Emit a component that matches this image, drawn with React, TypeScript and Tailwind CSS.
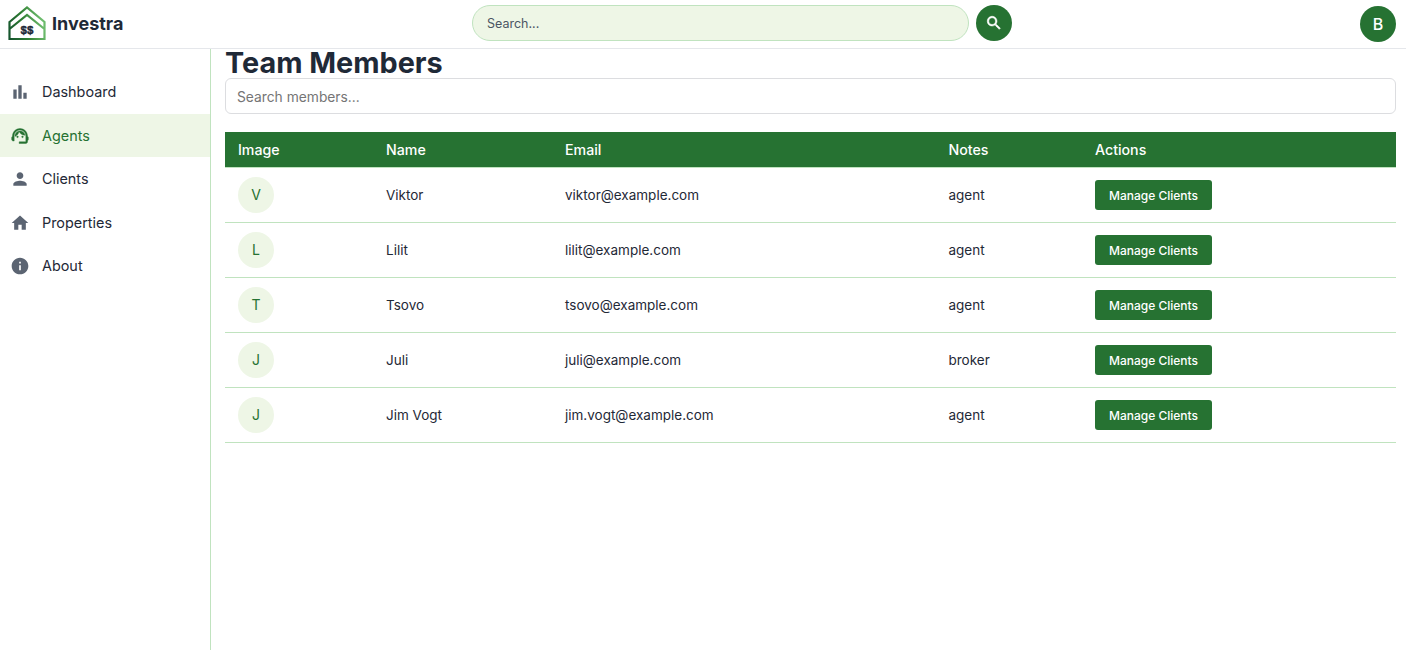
import React from "react";

const navItems = [
  {
    label: "Dashboard",
    icon: <path d="M4 9h4v11H4zm12 4h4v7h-4zm-6-9h4v16h-4z" />,
  },
  {
    label: "Agents",
    active: true,
    icon: (
      <>
        <path d="M21 12.22C21 6.73 16.74 3 12 3c-4.69 0-9 3.65-9 9.28-.6.34-1 .98-1 1.72v2c0 1.1.9 2 2 2h1v-6.1c0-3.87 3.13-7 7-7s7 3.13 7 7V19h-8v2h8c1.1 0 2-.9 2-2v-1.22c.59-.31 1-.92 1-1.64v-2.3c0-.7-.41-1.31-1-1.62z" />
        <circle cx="9" cy="13" r="1" />
        <circle cx="15" cy="13" r="1" />
        <path d="M18 11.03C17.52 8.18 15.04 6 12.05 6c-3.03 0-6.29 2.51-6.03 6.45 2.47-1.01 4.33-3.21 4.86-5.89 1.31 2.63 4 4.44 7.12 4.47z" />
      </>
    ),
  },
  {
    label: "Clients",
    icon: (
      <path d="M12 12c2.21 0 4-1.79 4-4s-1.79-4-4-4-4 1.79-4 4 1.79 4 4 4zm0 2c-2.67 0-8 1.34-8 4v2h16v-2c0-2.66-5.33-4-8-4z" />
    ),
  },
  {
    label: "Properties",
    icon: <path d="M10 20v-6h4v6h5v-8h3L12 3 2 12h3v8z" />,
  },
  {
    label: "About",
    icon: (
      <path d="M12 2C6.48 2 2 6.48 2 12s4.48 10 10 10 10-4.48 10-10S17.52 2 12 2zm1 15h-2v-6h2v6zm0-8h-2V7h2v2z" />
    ),
  },
];

const members = [
  { name: "Viktor", email: "viktor@example.com", notes: "agent" },
  { name: "Lilit", email: "lilit@example.com", notes: "agent" },
  { name: "Tsovo", email: "tsovo@example.com", notes: "agent" },
  { name: "Juli", email: "juli@example.com", notes: "broker" },
  { name: "Jim Vogt", email: "jim.vogt@example.com", notes: "agent" },
];

const cols = "grid grid-cols-[148px_179px_383.5px_146.5px_1fr] items-center px-[13px]";

function Logo() {
  return (
    <svg width="38" height="36" viewBox="0 0 38 36" className="shrink-0">
      <defs>
        <linearGradient id="logoGreen" x1="0" y1="1" x2="1" y2="0.75">
          <stop offset="0" stopColor="#14532d" />
          <stop offset="0.5" stopColor="#2e7d32" />
          <stop offset="1" stopColor="#6cbb6c" />
        </linearGradient>
      </defs>
      <path
        d="M1.5 16 L19 1.5 L36.5 16 V33 H1.5 Z M1.5 23 L19 9 L36.5 23"
        fill="none"
        stroke="url(#logoGreen)"
        strokeWidth="2.2"
        strokeLinejoin="miter"
      />
      <text
        x="19"
        y="28"
        textAnchor="middle"
        fontFamily="'Liberation Sans', sans-serif"
        fontWeight="700"
        fontSize="11.5"
        fill="#1f2937"
        stroke="#1f2937"
        strokeWidth="0.4"
      >
        $$
      </text>
    </svg>
  );
}

export default function App() {
  return (
    <div className="h-[650px] overflow-hidden bg-white font-['Inter',sans-serif] text-[#1f2937]">
      <header className="relative flex h-[49px] items-center justify-between border-b border-[#e5e7eb] pl-2 pr-[10px]">
        <div className="flex items-center gap-[6px]">
          <Logo />
          <span className="text-lg font-bold">Investra</span>
        </div>
        <div className="absolute left-[472px] top-[5px] flex items-center gap-[7px]">
          <input
            placeholder="Search..."
            className="h-9 w-[497px] rounded-full border border-[#c0e3bf] bg-[#eef6e6] px-[14px] text-[12.5px] outline-none placeholder:text-[#4b5563]"
          />
          <button className="flex h-9 w-9 items-center justify-center rounded-full bg-[#267232]">
            <svg width="18" height="18" viewBox="0 0 24 24" fill="#fff" stroke="#fff" strokeWidth="0.7">
              <path d="M15.5 14h-.79l-.28-.27C15.41 12.59 16 11.11 16 9.5 16 5.91 13.09 3 9.5 3S3 5.91 3 9.5 5.91 16 9.5 16c1.61 0 3.09-.59 4.23-1.57l.27.28v.79l5 4.99L20.49 19l-4.99-5zm-6 0C7.01 14 5 11.99 5 9.5S7.01 5 9.5 5 14 7.01 14 9.5 11.99 14 9.5 14z" />
            </svg>
          </button>
        </div>
        <div className="flex h-9 w-9 items-center justify-center rounded-full bg-[#267232] text-base font-medium text-white">
          B
        </div>
      </header>

      <div className="flex h-[601px]">
        <aside className="w-[211px] shrink-0 border-r border-[#c0e3bf] pt-[21.5px]">
          {navItems.map((item) => (
            <div
              key={item.label}
              className={`mb-[0.5px] flex h-[43px] items-center gap-[12px] pl-[10px] text-[14.4px] ${
                item.active ? "bg-[#eef6e6] text-[#267232]" : ""
              }`}
            >
              <svg
                width="20"
                height="20"
                viewBox="0 0 24 24"
                fill={item.active ? "#267232" : "#5b6472"}
                stroke={item.active ? "#267232" : "none"}
                strokeWidth="0.5"
                className="shrink-0"
              >
                {item.icon}
              </svg>
              {item.label}
            </div>
          ))}
        </aside>

        <main className="min-w-0 flex-1 pl-[14px] pr-[10px]">
          <h1 className="h-[29px] text-[28.8px] font-bold leading-[27px]">Team Members</h1>
          <input
            placeholder="Search members..."
            className="block h-9 w-full rounded-md border border-[#dcdde0] px-[11px] pt-px text-[13.8px] outline-none placeholder:text-[#757575]"
          />
          <div className="mt-[18px] text-[13.5px]">
            <div className={`${cols} h-9 border-b border-[#c0e3bf] bg-[#267232] bg-clip-padding text-[14.2px] font-medium text-white`}>
              <span>Image</span>
              <span>Name</span>
              <span>Email</span>
              <span>Notes</span>
              <span>Actions</span>
            </div>
            {members.map((m) => (
              <div key={m.email} className={`${cols} h-[55px] border-b border-[#c0e3bf]`}>
                <div className="flex h-9 w-9 items-center justify-center rounded-full bg-[#eef6e6] text-sm text-[#267232]">
                  {m.name[0]}
                </div>
                <span>{m.name}</span>
                <span>{m.email}</span>
                <span>{m.notes}</span>
                <div>
                  <button className="h-[30px] w-[117px] rounded-[3px] bg-[#267232] pt-px text-xs font-medium text-white">
                    Manage Clients
                  </button>
                </div>
              </div>
            ))}
          </div>
        </main>
      </div>
    </div>
  );
}
